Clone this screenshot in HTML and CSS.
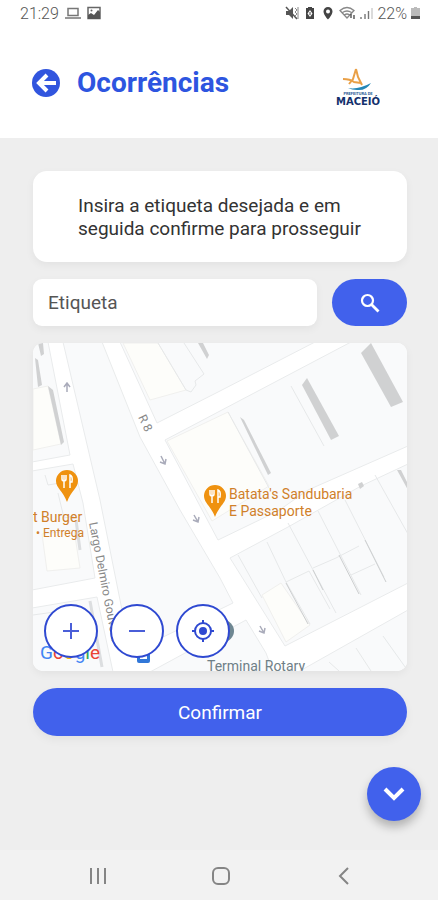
FILE: index.html
```
<!DOCTYPE html>
<html lang="pt-BR">
<head>
    <meta charset="utf-8">
    <meta name="viewport" content="width=device-width, initial-scale=1">
    <title>Ocorrências</title>
    <link rel="stylesheet" href="styles.css">
</head>
<body>
    <header class="header">
        <div class="status">
            <div class="status-group">
                <span>21:29</span>
                <svg width="16" height="14" viewBox="0 0 16 14" fill="none" stroke="#777" stroke-width="1.5">
                    <path d="M3 2.5h10v7H3zM0 12h16"/>
                </svg>
                <svg width="14" height="14" viewBox="0 0 14 14">
                    <rect x="1" y="1.5" width="12" height="11" fill="#fff" stroke="#666" stroke-width="1.5"/>
                    <path d="M1 13V9l3-2 3 2 4-5 2 2v7z" fill="#555"/>
                    <circle cx="4.500" cy="4.500" r="1" fill="#666"/>
                </svg>
            </div>
            <div class="status-group right">
                <svg width="14" height="14" viewBox="0 0 14 14">
                    <path d="M1 5h3l4-4v12L4 9H1z" fill="#555"/>
                    <path d="M1 1l11 12" stroke="#555" stroke-width="1.5"/>
                    <path d="M10 2l2 2-2 2 2 2-2 2 2 2M13 1v12" fill="none" stroke="#888"/>
                </svg>
                <svg width="14" height="14" viewBox="0 0 14 14">
                    <path d="M5 1h4v1h2v11H3V2h2z" fill="#444"/>
                    <path d="M7 4l2.500 3.500L7 11 4.500 7.500z" fill="#fff"/>
                    <path d="M7 6v3" stroke="#444"/>
                </svg>
                <svg width="14" height="14" viewBox="0 0 14 14">
                    <path d="M7 1a4.500 4.500 0 0 0-4.500 4.500C2.500 9 7 13.500 7 13.500S11.500 9 11.500 5.500A4.500 4.500 0 0 0 7 1z" fill="#444"/>
                    <circle cx="7" cy="5.500" r="2" fill="#fff"/>
                </svg>
                <svg width="17" height="14" viewBox="0 0 17 14" fill="none" stroke="#888" stroke-width="1.300">
                    <path d="M1 4.500q7-6 14 0L8 12zM3.500 6.500q4.500-3 9 0M5.500 9q2.500-2 5 0"/>
                    <path d="M12 8v4M15 9v4" stroke="#444"/>
                </svg>
                <svg width="13" height="14" viewBox="0 0 13 14" stroke="#777" stroke-width="1.400">
                    <path d="M1 11v2M5 8v5M8.500 5v8"/>
                    <path d="M12 2v11" stroke="#ccc"/>
                </svg>
                <span>22%</span>
                <svg width="9" height="14" viewBox="0 0 9 14">
                    <path d="M3 1h3v1h3v11H0V2h3z" fill="#bbb"/>
                    <path d="M0 10h9v3H0z" fill="#555"/>
                </svg>
            </div>
        </div>
        <div class="title-bar">
            <button class="back" type="button" aria-label="Voltar">
                <svg width="28" height="28" viewBox="0 0 28 28">
                    <circle cx="14" cy="14" r="14" fill="#3155de"/>
                    <path d="M15 6l-8 8 8 8M8 14h16" fill="none" stroke="#fff" stroke-width="4"/>
                </svg>
            </button>
            <h1>Ocorrências</h1>
            <svg class="logo" width="44" height="38" viewBox="0 0 44 38" role="img" aria-label="Prefeitura de Maceió">
                <path d="M20 1l-3 10-4 5M20 1l2 8 4 8M7 11q7 0 11 3l7 1" fill="none" stroke="#e9a047" stroke-width="2"/>
                <path d="M12 20q10 2 23-5-5 8-14 7-5 0-9-2z" fill="#2387b7"/>
                <text x="22" y="27" class="logo-small">PREFEITURA DE</text>
                <text x="22" y="37" class="logo-name">MACEIÓ</text>
            </svg>
        </div>
    </header>

    <main class="content">
        <p class="message">Insira a etiqueta desejada e em seguida confirme para prosseguir</p>

        <form class="search">
            <input type="text" id="etiqueta" placeholder="Etiqueta" aria-label="Etiqueta">
            <button type="button" class="search-button" aria-label="Buscar">
                <svg width="20" height="20" viewBox="0 0 20 20" fill="none" stroke="#fff">
                    <circle cx="7.500" cy="7.500" r="5.500" stroke-width="2.200"/>
                    <path d="M11.500 11.500l7 7" stroke-width="2.800"/>
                </svg>
            </button>
        </form>

        <section class="map" aria-label="Mapa">
            <svg class="map-canvas" viewBox="0 0 374 328" preserveAspectRatio="xMidYMid slice">
                <rect width="374" height="328" fill="#fff"/>
                <!-- blocks -->
                <g fill="#f9fafb" stroke="#e9ebec">
                    <path d="M-1-1H15L37 112-1 119z"/>
                    <path d="M-1 128L40 121 50 160 62 235-1 247z"/>
                    <path d="M-1 265L64 254 80 329H-1z"/>
                    <path d="M30-1H69L107 94 147 167 187 235 200 260 124 297 98 310 89 267 67 157z"/>
                    <path d="M87-1H282L187 48 124 80z"/>
                    <path d="M132 97L187 68 318-1H375V103L275 147 245 168 185 197z"/>
                    <path d="M197 215L255 184 328 143 375 121V240L252 303z"/>
                    <path d="M265 329L375 267V329z"/>
                    <path d="M117 329L213 277 233 310 240 329z"/>
                </g>
                <!-- buildings -->
                <g fill="#fdfdfa" stroke="#f0f0ee">
                    <path d="M0 46l15-3 13 58-28 6z"/>
                    <path d="M90 0h35l28 47-36 10z"/>
                    <path d="M134 98l61-29 41 74-57 35z"/>
                    <path d="M9 191l32-4 6 38-33 3z"/>
                    <path d="M229 252l19-12 29 42-24 17z"/>
                </g>
                <g fill="none" stroke="#e6e8e9">
                    <path d="M125 0l28 47 5 2 5-7-1-4 9-7-20-31M12 132l3 10 12-2M25 150l6 25 10-2"/>
                    <path d="M195 69l41 76M258 43l33 60M205 212l24 43M234 199l19 40 24 42M253 239l23-11 21 38M255 180l48 90M285 168l43 84M280 225l23-10 23-12M312 157l39 77M318 232l24-11M342 132l33 59M0 272l50-7M296 319l10 9M323 305l15 23M350 293l25 35"/>
                </g>
                <!-- building shadows -->
                <g fill="#d0d1d2">
                    <path d="M207 74l4 3 27 53-3 2z"/>
                    <path d="M269 42l5-7 32 58-8 4z"/>
                    <path d="M328 10l10-10 32 59-12 5z"/>
                    <path d="M15 43l5 4 11 52-3 3z"/>
                    <path d="M2 15l3 2 4 25-4 2zM5 0h5l1 11-3 2z"/>
                    <path d="M165 0h5l6 12-2 4zM325 141l4-2 2 4-4 3zM364 127l4 0 7 14v6z"/>
                </g>
                <path d="M253 240l22 41M280 227l10 20M306 212l20 39M332 197l21 42" stroke="#cccecf" fill="none"/>
                <path d="M57 258l12 66M47 207l-4-30" stroke="#dcdee0" stroke-width="3"/>
                <!-- direction arrows -->
                <g fill="none" stroke="#a9abba" stroke-width="1.500">
                    <path d="M34 49v-9m-3 4l3-4 3 4"/>
                    <path d="M128 113l4 8m-5-2l5 2 1-5M161 172l4 7m-5-2l5 2 1-5M227 283l4 7m-5-2l5 2 1-5"/>
                </g>
                <g class="street">
                    <text transform="translate(105 74) rotate(65)">R 8</text>
                    <text transform="translate(56 180) rotate(79)">Largo Delmiro Gouveia</text>
                </g>
                <!-- restaurants -->
                <g id="pin">
                    <path d="M34 127a11 11 0 0 0-11 11c0 7 7 10 11 21 4-11 11-14 11-21a11 11 0 0 0-11-11z" fill="#ef9210"/>
                    <path d="M29 132v4q0 2 2 2t2-2v-4M31 132v13M37 145v-13q3 1 2 7h-2" fill="none" stroke="#fff" stroke-width="1.500"/>
                </g>
                <use href="#pin" x="148" y="15"/>
                <g class="place">
                    <text x="0" y="179">t Burger</text>
                    <text x="3" y="194" class="small">• Entrega</text>
                    <text x="196" y="156">Batata's Sandubaria</text>
                    <text x="196" y="173">E Passaporte</text>
                </g>
                <circle cx="190" cy="288" r="11" fill="#6f8792"/>
                <rect x="104" y="306" width="13" height="14" rx="2" fill="#3177d8"/>
                <path d="M107 312h7v4h-7z" fill="#fff"/>
                <text x="174" y="328" class="terminal">Terminal Rotary</text>
                <text x="7" y="316" class="google"><tspan fill="#4285f4">G</tspan><tspan fill="#ea4335">o</tspan><tspan fill="#fbbc05">o</tspan><tspan fill="#4285f4">g</tspan><tspan fill="#34a853">l</tspan><tspan fill="#ea4335">e</tspan></text>
            </svg>
            <div class="map-controls">
                <button type="button" aria-label="Aproximar">
                    <svg width="24" height="24" viewBox="0 0 24 24" stroke="#4a5ed8" stroke-width="2"><path d="M12 4v16M4 12h16"/></svg>
                </button>
                <button type="button" aria-label="Afastar">
                    <svg width="24" height="24" viewBox="0 0 24 24" stroke="#4a5ed8" stroke-width="2"><path d="M4 12h16"/></svg>
                </button>
                <button type="button" aria-label="Minha localização">
                    <svg width="24" height="24" viewBox="0 0 24 24" fill="none" stroke="#2f49d1" stroke-width="2">
                        <circle cx="12" cy="12" r="8"/>
                        <circle cx="12" cy="12" r="4" fill="#2f49d1" stroke="none"/>
                        <path d="M12 1v3M12 20v3M1 12h3M20 12h3"/>
                    </svg>
                </button>
            </div>
        </section>

        <button type="button" class="confirm">Confirmar</button>
    </main>

    <button type="button" class="fab" aria-label="Descer">
        <svg width="24" height="16" viewBox="0 0 24 16" fill="none" stroke="#fff" stroke-width="4"><path d="M3 3l9 9 9-9"/></svg>
    </button>

    <nav class="nav">
        <button type="button" aria-label="Recentes">
            <svg width="20" height="20" viewBox="0 0 20 20" stroke="#858585" stroke-width="2"><path d="M3 2v16M10 2v16M17 2v16"/></svg>
        </button>
        <button type="button" aria-label="Início">
            <svg width="20" height="20" viewBox="0 0 20 20" fill="none" stroke="#858585" stroke-width="2"><rect x="2" y="2" width="16" height="16" rx="5"/></svg>
        </button>
        <button type="button" aria-label="Voltar">
            <svg width="20" height="20" viewBox="0 0 20 20" fill="none" stroke="#858585" stroke-width="2"><path d="M14 2l-8 8 8 8"/></svg>
        </button>
    </nav>
</body>
</html>
```
FILE: styles.css
```
* {
    box-sizing: border-box;
}
body {
    margin: 0;
    min-height: 100vh;
    display: flex;
    flex-direction: column;
    background-color: #eeeeee;
    font-family: Roboto, "Liberation Sans", sans-serif;
}
button {
    display: flex;
    align-items: center;
    justify-content: center;
    padding: 0;
    border: none;
    background: none;
    font-family: inherit;
    cursor: pointer;
}
.header {
    height: 138px;
    background-color: #fff;
}
.status {
    display: flex;
    justify-content: space-between;
    height: 26px;
    padding: 0 18px 0 20px;
    font-size: 16px;
    font-weight: 300;
    color: #555;
}
.status-group {
    display: flex;
    align-items: center;
    gap: 6px;
}
.status-group.right {
    gap: 4px;
}
.title-bar {
    display: flex;
    align-items: center;
    height: 112px;
    padding: 2px 58px 0 32px;
}
.title-bar h1 {
    flex: 1;
    margin: 0 0 0 17px;
    font-size: 28px;
    line-height: 32px;
    color: #2d55e0;
}
.logo {
    margin-top: 8px;
}
.logo-small {
    font-size: 4px;
    font-weight: bold;
    text-anchor: middle;
    fill: #2a5c95;
}
.logo-name {
    font-family: "DejaVu Sans", sans-serif;
    font-size: 10px;
    font-weight: bold;
    text-anchor: middle;
    fill: #13306c;
}
.content {
    flex: 1;
    display: flex;
    flex-direction: column;
    gap: 17px;
    padding: 33px 31px 24px 33px;
}
.message {
    margin: 0;
    padding: 23px 40px 22px 45px;
    border-radius: 14px;
    background-color: #fff;
    box-shadow: 0 3px 8px rgba(0, 0, 0, 0.05);
    font-size: 19px;
    line-height: 23px;
    color: #333;
}
.search {
    display: flex;
    gap: 15px;
}
.search input {
    flex: 1;
    min-width: 0;
    height: 47px;
    padding: 0 15px;
    border: none;
    border-radius: 9px;
    background-color: #fff;
    box-shadow: 0 3px 8px rgba(0, 0, 0, 0.05);
    font-family: inherit;
    font-size: 19px;
}
.search input::placeholder {
    color: #555;
    opacity: 1;
}
.search-button {
    width: 75px;
    height: 47px;
    border-radius: 24px;
    background-color: #4161ec;
}
.map {
    position: relative;
    height: 328px;
    border-radius: 10px;
    overflow: hidden;
    box-shadow: 0 3px 8px rgba(0, 0, 0, 0.05);
}
.map-canvas {
    display: block;
    width: 100%;
    height: 100%;
}
.map-controls {
    position: absolute;
    left: 11px;
    bottom: 13px;
    display: flex;
    gap: 12px;
}
.map-controls button {
    width: 54px;
    height: 54px;
    border: 2px solid #2f49d1;
    border-radius: 50%;
    background-color: #fff;
}
.street {
    font-size: 12px;
    fill: #888;
}
.place {
    font-size: 14px;
    fill: #d0802a;
}
.place .small {
    font-size: 12px;
}
.terminal {
    font-size: 14px;
    fill: #6f8087;
}
.google {
    font-size: 19px;
}
.confirm {
    height: 48px;
    border-radius: 24px;
    background-color: #4161ec;
    box-shadow: 0 4px 10px rgba(0, 0, 0, 0.05);
    font-size: 19px;
    color: #fff;
}
.fab {
    position: fixed;
    right: 17px;
    bottom: 79px;
    width: 54px;
    height: 54px;
    border-radius: 50%;
    background-color: #4161ec;
    box-shadow: 0 6px 10px rgba(0, 0, 0, 0.25);
}
.nav {
    display: flex;
    justify-content: space-around;
    align-items: center;
    height: 50px;
    padding: 2px 33px 0 37px;
    background-color: #f2f2f2;
}
```
